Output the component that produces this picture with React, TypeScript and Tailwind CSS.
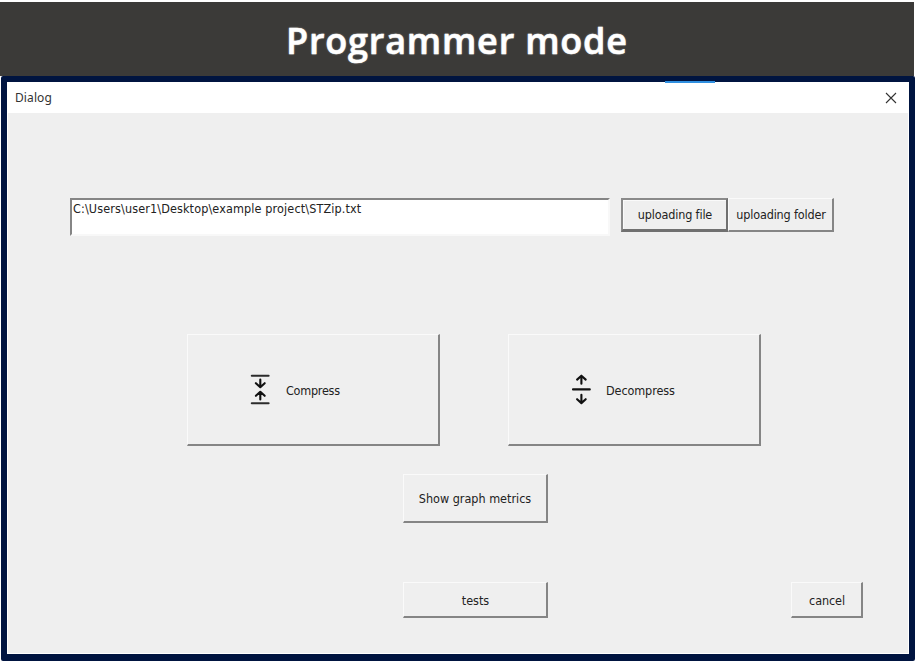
import type { ReactNode } from "react";

const raised =
  "flex items-center justify-center border-t border-l border-r-2 border-b-2 border-t-[#fafafa] border-l-[#fafafa] border-r-[#858585] border-b-[#858585] bg-[#efefef]";

function PushButton({ className, children }: { className: string; children: ReactNode }) {
  return <button className={`${raised} ${className}`}>{children}</button>;
}

function CompressIcon() {
  return (
    <svg width="20" height="32" viewBox="0 0 20 32" fill="none" stroke="#111" strokeWidth="2.1" strokeLinecap="round" strokeLinejoin="round">
      <path d="M1.8 1.8H18.6M1.8 29.2H18.6" stroke="#2b2b2b" />
      <path d="M10.3 5.6V13M5.9 9.2L10.3 13.2L14.7 9.2M10.3 25.4V18M5.9 21.8L10.3 17.8L14.7 21.8" />
    </svg>
  );
}

function DecompressIcon() {
  return (
    <svg width="20" height="32" viewBox="0 0 20 32" fill="none" stroke="#111" strokeWidth="2.1" strokeLinecap="round" strokeLinejoin="round">
      <path d="M2 15.4H18.8" />
      <path d="M10.4 9.8V1.8M6.1 5.6L10.4 1.7L14.7 5.6M10.4 20.8V29M6.1 25.2L10.4 29.1L14.7 25.2" />
    </svg>
  );
}

export default function App() {
  return (
    <div className="flex h-[661px] w-[916px] flex-col overflow-hidden bg-white pt-[2px] font-['DejaVu_Sans_Condensed','DejaVu_Sans',sans-serif] text-[12.5px] text-[#222]">
      <header className="flex h-[74px] w-[914px] shrink-0 bg-[#3b3a38] pl-[286px]">
        <h1 className="mt-[12px] h-[54px] whitespace-nowrap font-['Open_Sans',sans-serif] text-[36px] font-semibold leading-[54px] tracking-[0.8px] text-white [-webkit-text-stroke:0.5px_white] [text-shadow:0_0_2px_#aaa]">
          Programmer mode
        </h1>
      </header>
      <main className="ml-px flex h-[585px] w-[914px] shrink-0 flex-col rounded-[2px] border-6 border-b-[7px] border-[#001440]">
        <div className="relative flex h-[31px] shrink-0 items-center justify-between bg-white pr-[12px] pl-[8px]">
          <div className="absolute -top-px left-[658px] h-[2px] w-[50px] bg-[#2f8fe0]" />
          <span className="font-['Noto_Sans',sans-serif] text-[12px] tracking-[0.1px] text-[#333]">Dialog</span>
          <svg width="12" height="12" viewBox="0 0 12 12" stroke="#333" strokeWidth="1.1">
            <path d="M1 1L11 11M11 1L1 11" />
          </svg>
        </div>
        <div className="flex grow flex-col border-x border-b border-white bg-[#efefef]">
          <div className="mt-[85px] ml-[62px] flex h-[38px]">
            <div className="h-[38px] w-[540px] whitespace-nowrap border-2 border-t-[#858585] border-r-[#f8f8f8] border-b-[#f8f8f8] border-l-[#858585] bg-white pl-px leading-[18px] tracking-[0.13px]">
              C:\Users\user1\Desktop\example project\STZip.txt
            </div>
            <button className="ml-[11px] flex h-[34px] w-[107px] items-center justify-center whitespace-nowrap border-t-2 border-r-2 border-b-[3px] border-l-2 border-t-[#8a8a8a] border-r-[#707070] border-b-[#707070] border-l-[#8a8a8a] pt-[2px] pl-px tracking-[-0.15px] shadow-[inset_1px_1px_0_#fafafa]">
              uploading file
            </button>
            <PushButton className="h-[34px] w-[106px] pt-[2px] pl-px tracking-[-0.15px] whitespace-nowrap">uploading folder</PushButton>
          </div>
          <div className="mt-[98px] ml-[179px] flex h-[112px] gap-[68px]">
            <PushButton className="w-[253px]">
              <span className="flex w-full items-center pl-[62px]">
                <CompressIcon />
                <span className="ml-[16px] pt-[3px] tracking-[-0.25px]">Compress</span>
              </span>
            </PushButton>
            <PushButton className="w-[253px]">
              <span className="flex w-full items-center pl-[62px]">
                <DecompressIcon />
                <span className="ml-[15px] pt-[3px] tracking-[-0.1px]">Decompress</span>
              </span>
            </PushButton>
          </div>
          <PushButton className="mt-[28px] ml-[395px] h-[49px] w-[145px] pt-[2px] whitespace-nowrap">Show graph metrics</PushButton>
          <div className="mt-[59px] ml-[395px] flex h-[36px] gap-[243px]">
            <PushButton className="w-[145px] pt-[3px] pl-px">tests</PushButton>
            <PushButton className="w-[72px] pt-[3px] pl-px tracking-[-0.1px]">cancel</PushButton>
          </div>
        </div>
      </main>
    </div>
  );
}
